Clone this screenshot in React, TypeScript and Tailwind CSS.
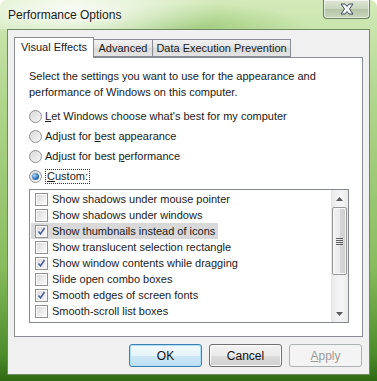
import React from "react";

const font = "font-['Liberation_Sans',Arial,sans-serif]";

function Radio({ checked }: { checked?: boolean }) {
  return (
    <span className="relative inline-flex h-[13px] w-[13px] shrink-0 items-center justify-center rounded-full border border-[#8e8f8f] bg-[linear-gradient(135deg,#d8d8d8,#f8f8f8)]">
      {checked && (
        <span className="h-[7px] w-[7px] rounded-full bg-[radial-gradient(circle_at_35%_35%,#a6d6ff,#2a6db5_60%,#16457d)]" />
      )}
    </span>
  );
}

function Check({ checked }: { checked?: boolean }) {
  return (
    <span className="inline-flex h-[13px] w-[13px] shrink-0 items-center justify-center border border-[#8f8f8f] bg-[#f4f4f4]">
      <span className="flex h-[11px] w-[11px] items-center justify-center border border-white bg-[linear-gradient(135deg,#dadada,#fbfbfb)]">
        {checked && (
          <svg width="9" height="9" viewBox="0 0 9 9">
            <path d="M1.5 4.5 L3.5 7 L7.5 1" fill="none" stroke="#4b6199" strokeWidth="1.6" />
          </svg>
        )}
      </span>
    </span>
  );
}

const options = [
  { label: "Show shadows under mouse pointer" },
  { label: "Show shadows under windows" },
  { label: "Show thumbnails instead of icons", checked: true, hl: true },
  { label: "Show translucent selection rectangle" },
  { label: "Show window contents while dragging", checked: true },
  { label: "Slide open combo boxes" },
  { label: "Smooth edges of screen fonts", checked: true },
  { label: "Smooth-scroll list boxes" },
];

function Btn({ children, focus, disabled }: { children: React.ReactNode; focus?: boolean; disabled?: boolean }) {
  return (
    <button
      className={
        "flex h-[23px] w-[73px] items-center justify-center rounded-[3px] border text-[12px] " +
        (focus
          ? "border-[#3c7fb1] bg-[linear-gradient(180deg,#f4fbfe_0%,#e6f3fb_50%,#cde8f6_51%,#bfe0f3_100%)] text-[#111] shadow-[inset_0_0_0_1px_#aee0f7]"
          : disabled
            ? "border-[#adb2b5] bg-[#f4f4f4] text-[#9a9a9a]"
            : "border-[#707070] bg-[linear-gradient(180deg,#f2f2f2_0%,#ebebeb_50%,#dddddd_51%,#cfcfcf_100%)] text-[#111] shadow-[inset_0_0_0_1px_#fcfcfc]")
      }
    >
      {children}
    </button>
  );
}

export default function App() {
  return (
    <div
      className={
        "relative h-[381px] w-[377px] overflow-hidden rounded-t-[7px] bg-[linear-gradient(180deg,#d3eab9_0%,#b2d78e_25%,#88bc5e_70%,#4d8c2b_93%,#2f6a14_100%)] " +
        font
      }
    >
      {/* title bar */}
      <div className="relative flex h-[29px] items-center bg-[radial-gradient(ellipse_150px_40px_at_70px_10px,rgba(255,255,255,0.9),rgba(255,255,255,0)_100%),radial-gradient(ellipse_120px_30px_at_190px_32px,rgba(120,180,80,0.55),rgba(120,180,80,0)_100%)] pl-[8px]">
        <span className="text-[12px] leading-none text-[#1a1a1a] [text-shadow:0_0_6px_#fff]">Performance Options</span>
        <div className="absolute right-[7px] top-0 flex h-[19px] w-[47px] items-center justify-center rounded-b-[4px] border border-t-0 border-[#6a7f60] bg-[linear-gradient(180deg,#dde6d4_0%,#c9d6be_50%,#b4c4a6_51%,#c8d6bb_100%)] shadow-[inset_0_0_0_1px_rgba(255,255,255,0.6)]">
          <svg width="16" height="12" viewBox="0 0 16 12">
            <path
              d="M2 1 H6 L8 3.5 L10 1 H14 L10.5 6 L14 11 H10 L8 8.5 L6 11 H2 L5.5 6 Z"
              fill="#f4f6f8"
              stroke="#3c4a5a"
              strokeWidth="1"
              strokeLinejoin="round"
            />
          </svg>
        </div>
      </div>

      {/* client area */}
      <div className="ml-[7px] flex h-[346px] w-[363px] flex-col border border-[#6f8a63] bg-[#f0f0f0] pl-[6px] pr-[7px] pt-[7px]">
        {/* tabs */}
        <div className="relative z-10 flex h-[20px] items-end whitespace-nowrap text-[11px] text-[#1a1a1a]">
          <div className="-mb-px flex h-[21px] w-[80px] items-center justify-center border border-b-0 border-[#898c95] bg-white pb-[1px]">
            Visual Effects
          </div>
          <div className="flex h-[18px] w-[59px] items-center justify-center border border-l-0 border-[#898c95] bg-[linear-gradient(180deg,#f2f2f2,#e3e3e3_50%,#d9d9d9_51%,#e4e4e4)]">
            Advanced
          </div>
          <div className="flex h-[18px] w-[138px] items-center justify-center border border-l-0 border-[#898c95] bg-[linear-gradient(180deg,#f2f2f2,#e3e3e3_50%,#d9d9d9_51%,#e4e4e4)]">
            Data Execution Prevention
          </div>
        </div>

        {/* panel */}
        <div className="flex h-[280px] w-[349px] flex-col border border-[#898c95] bg-white pl-[14px] pt-[10px] text-[11px] text-[#1a1a1a]">
          <p className="leading-[16px]">
            Select the settings you want to use for the appearance and
            <br />
            performance of Windows on this computer.
          </p>

          <div className="mt-[6px] flex flex-col">
            <label className="flex h-[20px] items-center gap-[3px]">
              <Radio />
              <span>
                <u>L</u>et Windows choose what's best for my computer
              </span>
            </label>
            <label className="flex h-[20px] items-center gap-[3px]">
              <Radio />
              <span>
                Adjust for <u>b</u>est appearance
              </span>
            </label>
            <label className="flex h-[20px] items-center gap-[3px]">
              <Radio />
              <span>
                Adjust for best <u>p</u>erformance
              </span>
            </label>
            <label className="flex h-[20px] items-center gap-[3px]">
              <Radio checked />
              <span className="border border-dotted border-[#333] px-px leading-[13px]">
                <u>C</u>ustom:
              </span>
            </label>
          </div>

          {/* list box */}
          <div className="mt-[3px] flex h-[134px] w-[320px] border border-[#828790] bg-white">
            <div className="flex flex-1 flex-col pt-[1px]">
              {options.map((o) => (
                <div key={o.label} className="flex h-[16px] items-center pl-px">
                  <div
                    className={
                      "flex h-[16px] items-center gap-[4px] pl-[4px] pr-[3px] " + (o.hl ? "bg-[#d9d9d9]" : "")
                    }
                  >
                    <Check checked={o.checked} />
                    <span className="leading-[16px]">{o.label}</span>
                  </div>
                </div>
              ))}
            </div>
            {/* scrollbar */}
            <div className="flex w-[17px] flex-col bg-[linear-gradient(90deg,#e6e6e6,#f3f3f3_40%,#f3f3f3_70%,#e9e9e9)]">
              <div className="flex h-[17px] items-center justify-center">
                <svg width="7" height="4" viewBox="0 0 7 4">
                  <path d="M0 4 L3.5 0 L7 4 Z" fill="#5a5a5a" />
                </svg>
              </div>
              <div className="mx-px flex h-[68px] items-center justify-center rounded-[2px] border border-[#979797] bg-[linear-gradient(90deg,#f2f2f2,#ebebeb_50%,#d6d6d6_51%,#d0d0d0)] shadow-[inset_0_0_0_1px_#f8f8f8]">
                <div className="flex flex-col gap-[1px]">
                  <span className="h-px w-[7px] bg-[#5e5e5e]" />
                  <span className="h-px w-[7px] bg-[#5e5e5e]" />
                  <span className="h-px w-[7px] bg-[#5e5e5e]" />
                  <span className="h-px w-[7px] bg-[#5e5e5e]" />
                </div>
              </div>
              <div className="flex-1" />
              <div className="flex h-[17px] items-center justify-center">
                <svg width="7" height="4" viewBox="0 0 7 4">
                  <path d="M0 0 L3.5 4 L7 0 Z" fill="#5a5a5a" />
                </svg>
              </div>
            </div>
          </div>
        </div>

        {/* buttons */}
        <div className="mt-[7px] flex justify-end gap-[7px]">
          <Btn focus>OK</Btn>
          <Btn>Cancel</Btn>
          <Btn disabled>
            <u>A</u>pply
          </Btn>
        </div>
      </div>
    </div>
  );
}
